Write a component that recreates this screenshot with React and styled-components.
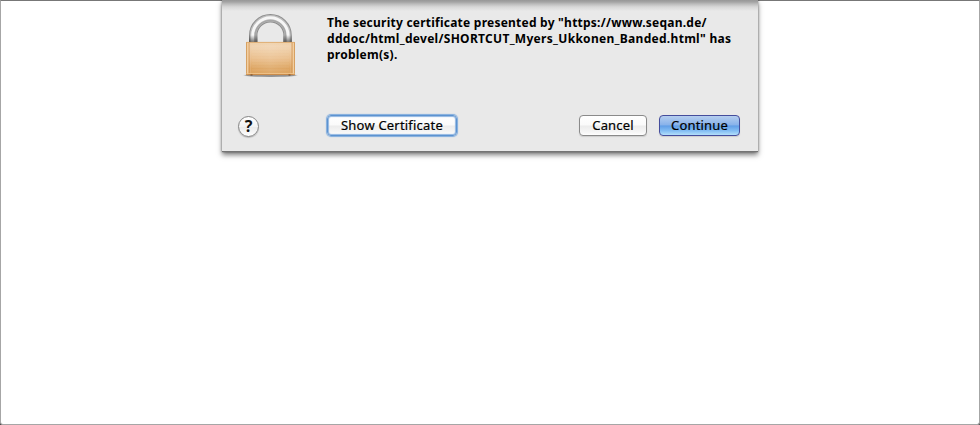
import React from 'react';
import styled, { createGlobalStyle, css } from 'styled-components';

const GlobalStyle = createGlobalStyle`
  * { box-sizing: border-box; }
  body { margin: 0; background: #444; overflow: hidden; }
`;

const Window = styled.main`
  width: 980px;
  height: 425px;
  display: flex;
  justify-content: center;
  align-items: flex-start;
  background: #fff;
  border: 1px solid #a6a6a6;
  border-top-color: #777;
  border-radius: 0 0 3px 3px;
  font-family: 'Noto Sans', 'Open Sans', sans-serif;
  color: #000;
`;

const Sheet = styled.section`
  width: 536px;
  height: 152px;
  margin-top: -1px;
  padding: 14px 18px 0 16px;
  display: flex;
  flex-direction: column;
  background: linear-gradient(#979797 0, #a4a4a4 2px, #bcbcbc 4px, #d8d8d8 7px, #e9e9e9 11px, #e9e9e9 100%);
  border-bottom: 1px solid #747474;
  box-shadow: 0 3px 5px rgba(0, 0, 0, 0.5), 0 0 2px rgba(0, 0, 0, 0.4);
  clip-path: inset(0 -12px -16px -12px);
`;

const Summary = styled.div`
  display: flex;
  height: 101px;
`;

const LockArt = styled.svg`
  flex: none;
  width: 64px;
  height: 68px;
  margin-right: 25px;
`;

const Message = styled.p`
  margin: 1px 0 0;
  font-size: 12px;
  font-weight: 700;
  line-height: 16px;
`;

const Line = styled.span`
  display: block;
  white-space: nowrap;
  letter-spacing: ${(p) => p.$track}px;
`;

const Actions = styled.div`
  display: flex;
  align-items: flex-start;
`;

const HelpButton = styled.button`
  width: 21px;
  height: 21px;
  margin: 1px 68px 0 0;
  padding: 0 0 1px;
  border: 1px solid #858585;
  border-radius: 50%;
  background: linear-gradient(#fff, #f3f3f3 50%, #eaeaea 52%, #fff);
  box-shadow: 0 1px 1px rgba(0, 0, 0, 0.2);
  font: 700 16px/17px 'Noto Sans', sans-serif;
  color: #111;
`;

const PushButton = styled.button`
  width: ${(p) => p.$width}px;
  height: 21px;
  padding: 0 0 1px;
  border: 1px solid #8a8a8a;
  border-radius: 4px;
  background: linear-gradient(#fff 0, #fafafa 48%, #ececec 52%, #f6f6f6 85%, #fff 100%);
  box-shadow: 0 1px 1px rgba(0, 0, 0, 0.12);
  font: 400 13px/18px 'Noto Sans', sans-serif;
  letter-spacing: ${(p) => p.$track || 0}px;
  white-space: nowrap;
  color: #000;
  -webkit-text-stroke: 0.2px #000;
  ${(p) => p.$focused && css`
    border-color: #5c93d0;
    border-radius: 4px;
    box-shadow: inset 0 0 1px 1px #8fb5e2, 0 0 1px 1px #7fabdd;
  `}
  ${(p) => p.$primary && css`
    border-color: #454d9c;
    background: linear-gradient(#b5ceef 0, #8ab3ea 45%, #629fe7 53%, #83bdf3 78%, #b3e0fb 100%);
  `}
`;

const Confirm = styled.div`
  display: flex;
  gap: 12px;
  margin-left: auto;
`;

function Padlock() {
  return (
    <LockArt viewBox="238 14 64 68" role="img" aria-label="Locked">
      <defs>
        <linearGradient id="base" x1="0" x2="0" y1="0" y2="1">
          <stop offset="0" stopColor="#222" stopOpacity="0" />
          <stop offset="1" stopColor="#222" stopOpacity=".6" />
        </linearGradient>
        <linearGradient id="brass" x1="0" x2="0" y1="0" y2="1">
          <stop offset="0" stopColor="#efd0a9" />
          <stop offset=".15" stopColor="#f0d3b0" />
          <stop offset=".5" stopColor="#eabf8d" />
          <stop offset=".8" stopColor="#dda562" />
          <stop offset="1" stopColor="#dca25e" />
        </linearGradient>
        <linearGradient id="sheen" x1="0" x2="1" y1="0" y2="0">
          <stop offset="0" stopColor="#c98a42" />
          <stop offset=".035" stopColor="#f8d8ae" />
          <stop offset=".07" stopColor="#cf8c45" stopOpacity=".45" />
          <stop offset=".11" stopColor="#fff" stopOpacity="0" />
          <stop offset=".5" stopColor="#fff" stopOpacity=".08" />
          <stop offset=".9" stopColor="#fff" stopOpacity="0" />
          <stop offset=".935" stopColor="#c78136" stopOpacity=".5" />
          <stop offset=".965" stopColor="#f8d8ae" />
          <stop offset="1" stopColor="#c98a42" />
        </linearGradient>
        <filter id="soft" x="-20%" y="-200%" width="140%" height="500%">
          <feGaussianBlur stdDeviation="1 .7" />
        </filter>
        <filter id="polish" filterUnits="userSpaceOnUse" x="240" y="8" width="60" height="40">
          <feGaussianBlur stdDeviation=".45" />
        </filter>
      </defs>
      <ellipse cx="270.5" cy="75.3" rx="26" ry="1.6" fill="#666" opacity=".65" filter="url(#soft)" />
      <g fill="none" filter="url(#polish)">
        <path d="M253.200 43V35.500a17.200 17.200 0 0 1 34.400 0V43" stroke="#8e8e8e" strokeWidth="8.400" />
        <path d="M253.200 43V35.500a17.200 17.200 0 0 1 34.400 0V43" stroke="#bdbdbd" strokeWidth="6.400" />
        <path d="M252.700 43V35.500a17.700 17.700 0 0 1 35.400 0V43" stroke="#f6f6f6" strokeWidth="3" />
        <path d="M255.300 43V35.500a15.100 15.100 0 0 1 30.200 0V43" stroke="#a6a6a6" strokeWidth="1.500" />
      </g>
      <path d="M249 35h8.500v7H249zM283.300 35h8.500v7h-8.500z" fill="url(#base)" />
      <rect x="246" y="42" width="49" height="33" rx=".6" fill="url(#brass)" />
      <rect x="246" y="42" width="49" height="33" rx=".6" fill="url(#sheen)" />
      <path d="M252 46h37M252 49h37M252 52h37M252 55h37M252 58h37M252 61h37M252 64h37M252 67h37M252 70h37" stroke="#fff2dc" strokeWidth=".6" opacity=".15" />
      <path d="M246.500 42.400h48" stroke="#dba566" strokeWidth=".8" />
      <path d="M246.500 73.500h48" stroke="#f1c58d" strokeWidth=".8" />
      <path d="M246.500 74.600h48" stroke="#c08040" strokeWidth=".8" />
      <path d="M250.500 75h2M288.500 75h2" stroke="#6b4524" strokeWidth="1.200" />
    </LockArt>
  );
}

export default function App() {
  return (
    <>
      <GlobalStyle />
      <Window>
        <Sheet role="dialog">
          <Summary>
            <Padlock />
            <Message>
              <Line $track={0.235}>The security certificate presented by "https://www.seqan.de/</Line>
              <Line $track={0.295}>dddoc/html_devel/SHORTCUT_Myers_Ukkonen_Banded.html" has</Line>
              <Line $track={0.25}>problem(s).</Line>
            </Message>
          </Summary>
          <Actions>
            <HelpButton aria-label="Help">?</HelpButton>
            <PushButton $width={130} $track={0.2} $focused>Show Certificate</PushButton>
            <Confirm>
              <PushButton $width={68} $track={0.15}>Cancel</PushButton>
              <PushButton $width={81} $track={0.15} $primary>Continue</PushButton>
            </Confirm>
          </Actions>
        </Sheet>
      </Window>
    </>
  );
}
